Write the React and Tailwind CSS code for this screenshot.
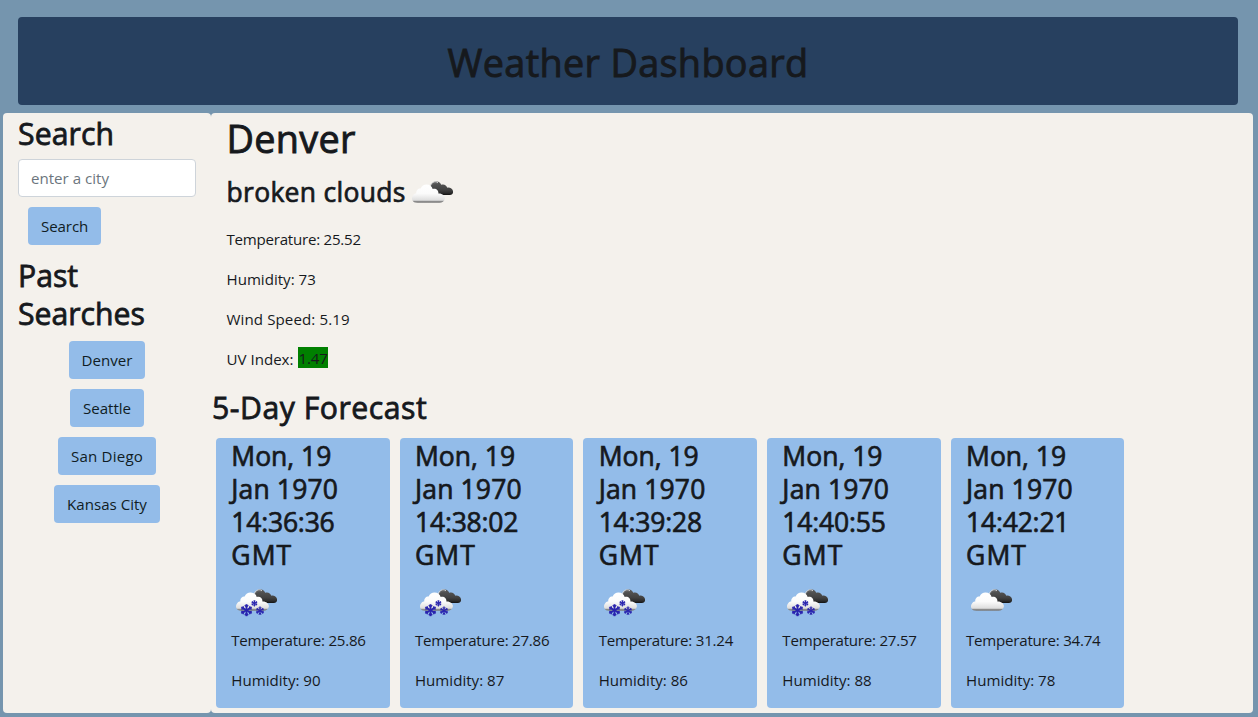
function Flake({ x, y, r, w }) {
  const arms = [0, 60, 120];
  return (
    <g transform={`translate(${x} ${y})`} stroke="#2a24ae" strokeWidth={w} fill="none">
      {arms.map((a) => (
        <g key={a} transform={`rotate(${a})`}>
          <path d={`M0 ${-r}V${r}`} />
          <path
            strokeWidth={w * 0.75}
            d={`M${-r * 0.28} ${-r * 0.85}L0 ${-r * 0.52}L${r * 0.28} ${-r * 0.85}M${-r * 0.28} ${r * 0.85}L0 ${r * 0.52}L${r * 0.28} ${r * 0.85}`}
          />
        </g>
      ))}
    </g>
  );
}

function CloudIcon({ snow = false, id }) {
  return (
    <svg width="50" height="50" viewBox="0 0 50 50" className="block shrink-0">
      <defs>
        <linearGradient id={`${id}-front`} x1="0" y1="0" x2="0" y2="1">
          <stop offset="0" stopColor="#ffffff" />
          <stop offset="0.5" stopColor="#fbfbfb" />
          <stop offset="0.86" stopColor="#dedede" />
          <stop offset="0.93" stopColor="#8a8a8a" />
          <stop offset="1" stopColor="#777777" />
        </linearGradient>
        <linearGradient id={`${id}-back`} x1="0" y1="0" x2="0" y2="1">
          <stop offset="0" stopColor="#5a5a5a" />
          <stop offset="0.6" stopColor="#424242" />
          <stop offset="0.85" stopColor="#2c2c2c" />
          <stop offset="1" stopColor="#111111" />
        </linearGradient>
      </defs>
      <path d="M23.5 20C24 16.2 27 14.2 30 14.6C32 14.8 33.5 16 34.2 17.8C37 16.6 39.6 18.4 40.2 20.7C43 20.2 45.4 21.6 46 24C46.5 26.5 45 28 42.6 28H29Z" fill={`url(#${id}-back)`} />
      <path d="M22.8 19.6C24.3 15.3 27.6 13.8 31 15.6" fill="none" stroke="#d8d8d8" strokeWidth="1" />
      <path d="M23.6 20C25 16.8 27.8 15.4 30.8 16.8" fill="none" stroke="#666666" strokeWidth="0.8" />
      <path d="M8.5 35.5C4.8 34.8 4 30.5 6.2 28.2C7.2 27 8.5 26.6 9.3 26.6C8.9 23.4 11.2 21.3 13.6 21.5C14.7 18.7 17 17.4 19.3 17.4C22.5 17.3 25 19.2 25.7 22.1C29.2 21 31.8 23.7 31.4 26.6C35.2 26.3 38.2 29 37.9 31.5C37.5 34.2 35 35.8 32.6 35.8H10.5Z" fill={`url(#${id}-front)`} />
      {snow && (
        <g>
          <Flake x={15.5} y={35.2} r={6} w={1.8} />
          <Flake x={23.4} y={28.3} r={3.1} w={1.1} />
          <Flake x={29} y={35.8} r={4.2} w={1.3} />
        </g>
      )}
    </svg>
  );
}

const pastSearches = ['Denver', 'Seattle', 'San Diego', 'Kansas City'];

const forecast = [
  { time: '14:36:36', temperature: '25.86', humidity: 90, snow: true },
  { time: '14:38:02', temperature: '27.86', humidity: 87, snow: true },
  { time: '14:39:28', temperature: '31.24', humidity: 86, snow: true },
  { time: '14:40:55', temperature: '27.57', humidity: 88, snow: true },
  { time: '14:42:21', temperature: '34.74', humidity: 78, snow: false },
];

function CityButton({ children }) {
  return (
    <button className="h-[38px] whitespace-nowrap rounded bg-[#93bce9] px-[13px] text-[15.1px] leading-6 text-[#101c24]">
      {children}
    </button>
  );
}

export default function App() {
  return (
    <div className="flex h-[717px] w-full flex-col overflow-hidden bg-[#7595ae] pt-[17px] font-['Open_Sans',sans-serif] text-[15.1px] leading-6 text-[#16191d]">
      <header className="mr-5 ml-[18px] flex h-[88px] shrink-0 justify-center rounded bg-[#27405f] pt-[22px]">
        <h1 className="text-[37.8px] leading-[48px] font-normal tracking-[0.33px] [-webkit-text-stroke:0.9px_#16191d]">Weather Dashboard</h1>
      </header>

      <div className="mt-2 mr-[5px] ml-[3px] flex h-[600px]">
        <aside className="w-[208px] shrink-0 rounded bg-[#f4f1ec] px-[15px]">
          <h2 className="mb-[6px] pt-[2px] text-[30.2px] leading-[38px] font-normal tracking-[0.1px] [-webkit-text-stroke:0.8px_#16191d]">Search</h2>
          <input
            placeholder="enter a city"
            className="block h-[38px] w-full rounded border border-[#ced4da] bg-white px-3 placeholder:text-[#6c757d]"
          />
          <div className="mt-2.5 ml-2.5 flex tracking-[-0.1px]">
            <CityButton>Search</CityButton>
          </div>
          <h2 className="mt-3 text-[30.2px] leading-[38px] font-normal [-webkit-text-stroke:0.8px_#16191d]">
            Past
            <br />
            Searches
          </h2>
          <div className="mt-2 flex flex-col items-center gap-2.5">
            {pastSearches.map((city) => (
              <CityButton key={city}>
                {city === 'San Diego' ? <span className="tracking-[0.2px]">{city}</span> : city}
              </CityButton>
            ))}
          </div>
        </aside>

        <main className="flex-1 rounded bg-[#f4f1ec]">
          <section className="px-[15.5px] pt-[2px]">
            <h1 className="text-[37.8px] leading-[48px] font-normal tracking-[0.3px] [-webkit-text-stroke:0.9px_#16191d]">Denver</h1>
            <div className="flex h-[58px] items-center gap-[1px]">
              <h3 className="-mt-px text-[26.5px] leading-[34px] font-normal tracking-[0.3px] [-webkit-text-stroke:0.7px_#16191d]">broken clouds</h3>
              <CloudIcon id="today" />
            </div>
            <div className="flex flex-col gap-4 pt-[6px]">
              <p className="tracking-[-0.24px]">Temperature: 25.52</p>
              <p>Humidity: 73</p>
              <p className="tracking-[0.1px]">Wind Speed: 5.19</p>
              <p className="flex items-start gap-[5px]">
                UV Index: <span className="h-[21px] bg-[#008000] leading-[23px] tracking-[-0.15px]">1.47</span>
              </p>
            </div>
          </section>

          <h2 className="mt-[18px] pl-px text-[30.2px] leading-[38px] font-normal tracking-[0.52px] [-webkit-text-stroke:0.8px_#16191d]">5-Day Forecast</h2>
          <div className="mt-[11px] ml-[5px] flex gap-[10px]">
            {forecast.map((day, i) => (
              <article key={day.time} className="h-[270px] w-[173.7px] rounded bg-[#93bce9] pt-[2px] pr-2 pl-[15.3px]">
                <h3 className="text-[26.5px] leading-[33px] font-normal [-webkit-text-stroke:0.7px_#16191d]">
                  Mon, 19
                  <br />
                  <span className="tracking-[0.15px]">Jan 1970</span>
                  <br />
                  <span className="tracking-[-0.2px]">{day.time}</span>
                  <br />
                  <span className="tracking-[1.1px]">GMT</span>
                </h3>
                <div className="mt-[3px] h-[50px]">
                  <CloudIcon id={`day${i}`} snow={day.snow} />
                </div>
                <p className="mt-[3px] whitespace-nowrap tracking-[-0.24px]">Temperature: {day.temperature}</p>
                <p className="mt-4">Humidity: {day.humidity}</p>
              </article>
            ))}
          </div>
        </main>
      </div>
    </div>
  );
}
